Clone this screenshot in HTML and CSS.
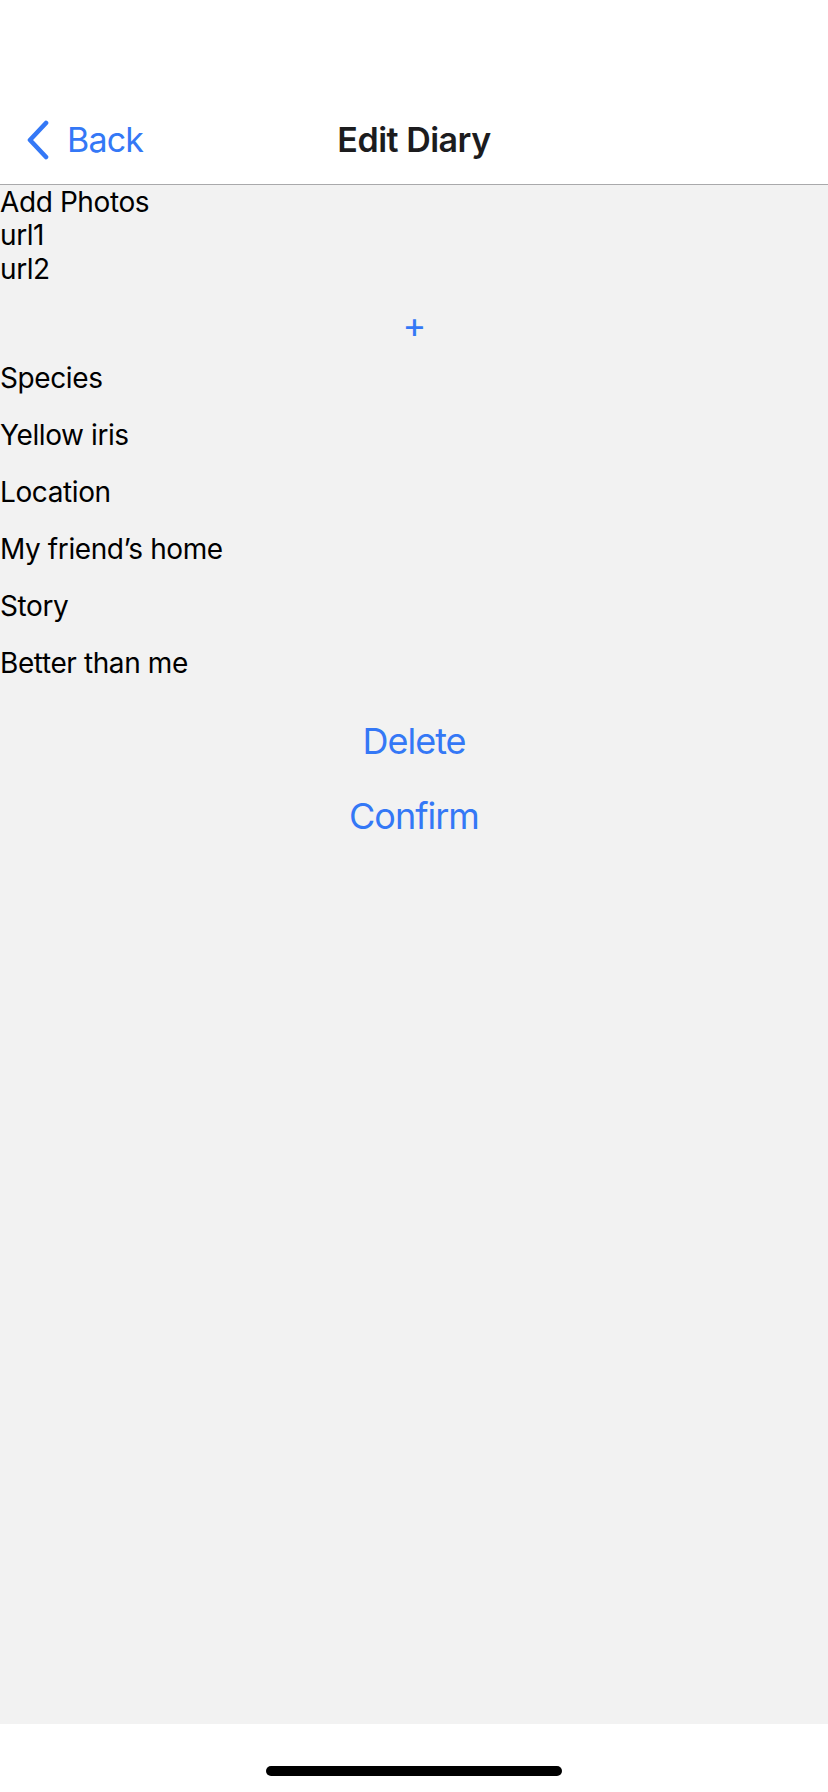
FILE: index.html
```html
<!DOCTYPE html>
<html lang="en">
<head>
<meta charset="utf-8">
<title>Edit Diary</title>
<link rel="stylesheet" href="styles.css">
</head>
<body>
<div class="screen">
  <div class="status-bar"></div>
  <header class="nav">
    <a class="back">
      <svg class="chevron" width="26" height="40" viewBox="0 0 26 40" aria-hidden="true">
        <polyline points="21,3 5,20 21,37" fill="none" stroke="#3478f6" stroke-width="4.6" stroke-linecap="round" stroke-linejoin="round"/>
      </svg>
      <span class="back-label">Back</span>
    </a>
    <h1 class="title">Edit Diary</h1>
    <div class="nav-spacer"></div>
  </header>
  <main class="content">
    <div class="photos">
      <p class="line">Add Photos</p>
      <p class="line">url1</p>
      <p class="line">url2</p>
    </div>
    <button class="btn btn-plus">+</button>
    <div class="fields">
      <p class="row">Species</p>
      <p class="row">Yellow iris</p>
      <p class="row">Location</p>
      <p class="row">My friend’s home</p>
      <p class="row">Story</p>
      <p class="row">Better than me</p>
    </div>
    <button class="btn">Delete</button>
    <button class="btn">Confirm</button>
  </main>
  <footer class="safe-bottom">
    <div class="home-indicator"></div>
  </footer>
</div>
</body>
</html>
```

FILE: styles.css
```css
* { box-sizing: border-box; }

html, body {
  margin: 0;
  padding: 0;
  background: #ffffff;
}

body {
  font-family: "Inter", "Roboto", "Liberation Sans", sans-serif;
  color: #000000;
}

.screen {
  width: 828px;
  height: 1792px;
  display: flex;
  flex-direction: column;
  overflow: hidden;
}

.status-bar {
  height: 88px;
  background: #ffffff;
  flex: none;
}

.nav {
  height: 97px;
  flex: none;
  background: #ffffff;
  border-bottom: 1px solid #a9a9ab;
  display: grid;
  grid-template-columns: 1fr auto 1fr;
  align-items: center;
  padding-top: 8px;
}

.back {
  display: flex;
  align-items: center;
  gap: 16px;
  padding-left: 25px;
  color: #3478f6;
  font-size: 34px;
  line-height: 40px;
  letter-spacing: -0.8px;
}

.chevron { display: block; }

.title {
  margin: 0;
  font-size: 34px;
  line-height: 40px;
  font-weight: 600;
  color: #1c1c1e;
  letter-spacing: -0.5px;
}

.content {
  flex: 1;
  background: #f2f2f2;
  display: flex;
  flex-direction: column;
  padding-top: 1px;
}

.line,
.row {
  margin: 0;
  font-size: 28px;
  line-height: 33.4px;
  letter-spacing: -0.4px;
}

.row {
  margin-bottom: 23.6px;
}

.fields {
  padding-top: 1px;
}

.btn {
  display: block;
  width: 100%;
  border: none;
  background: transparent;
  padding: 0;
  margin: 16px 0;
  font-family: inherit;
  font-size: 36px;
  line-height: 43px;
  color: #3478f6;
  text-align: center;
  letter-spacing: -1px;
}

.btn-plus {
  font-weight: 400;
  padding-top: 2px;
  margin-bottom: 14px;
}

.safe-bottom {
  height: 68px;
  flex: none;
  background: #ffffff;
  display: flex;
  justify-content: center;
  padding-top: 42px;
}

.home-indicator {
  width: 296px;
  height: 10px;
  border-radius: 5px;
  background: #000000;
}
```
